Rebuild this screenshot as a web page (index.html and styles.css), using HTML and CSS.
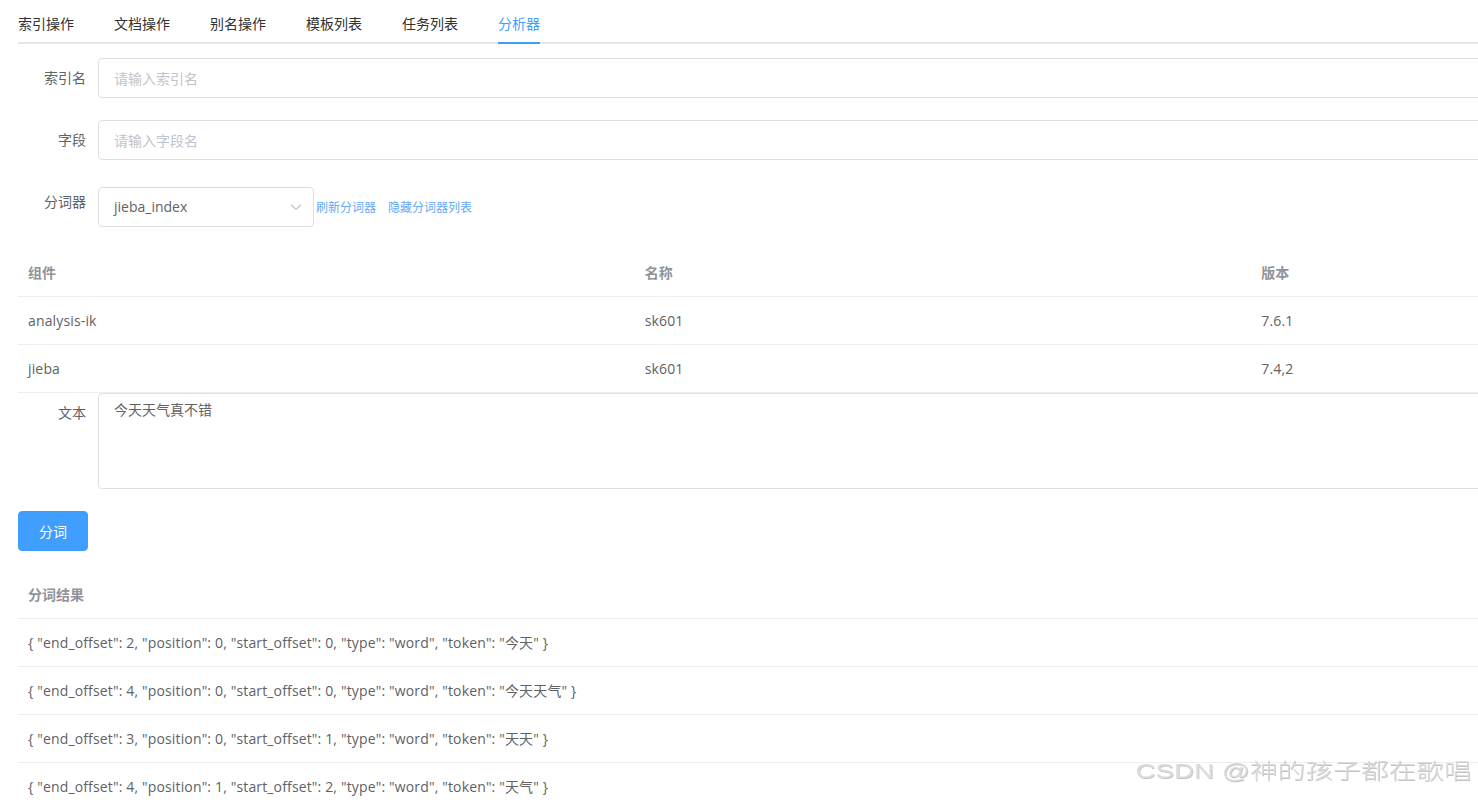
FILE: index.html
```html
<!DOCTYPE html>
<html lang="zh-CN">
<head>
<meta charset="utf-8">
<title>分析器</title>
<link rel="stylesheet" href="styles.css">
</head>
<body>
<div class="page">
  <div class="tabs">
    <div class="tab">索引操作</div>
    <div class="tab">文档操作</div>
    <div class="tab">别名操作</div>
    <div class="tab">模板列表</div>
    <div class="tab">任务列表</div>
    <div class="tab active">分析器</div>
  </div>

  <div class="form">
    <div class="form-item">
      <label class="label">索引名</label>
      <div class="content"><input class="input" placeholder="请输入索引名"></div>
    </div>
    <div class="form-item">
      <label class="label">字段</label>
      <div class="content"><input class="input" placeholder="请输入字段名"></div>
    </div>
    <div class="form-item">
      <label class="label">分词器</label>
      <div class="content content-select">
        <div class="select">
          <span class="select-value">jieba_index</span>
          <svg class="chevron" width="12" height="8" viewBox="0 0 12 8"><polyline points="1,1.5 6,6.5 11,1.5" fill="none" stroke="#c0c4cc" stroke-width="1.2"/></svg>
        </div>
        <span class="link link-first">刷新分词器</span>
        <span class="link">隐藏分词器列表</span>
      </div>
    </div>
  </div>

  <table class="table">
    <thead>
      <tr><th>组件</th><th>名称</th><th>版本</th></tr>
    </thead>
    <tbody>
      <tr><td>analysis-ik</td><td>sk601</td><td>7.6.1</td></tr>
      <tr><td>jieba</td><td>sk601</td><td>7.4,2</td></tr>
    </tbody>
  </table>

  <div class="form">
    <div class="form-item">
      <label class="label">文本</label>
      <div class="content"><textarea class="textarea" rows="4">今天天气真不错</textarea></div>
    </div>
  </div>

  <button class="btn">分词</button>

  <table class="table results">
    <thead>
      <tr><th>分词结果</th></tr>
    </thead>
    <tbody>
      <tr><td>{ "end_offset": 2, "position": 0, "start_offset": 0, "type": "word", "token": "今天" }</td></tr>
      <tr><td>{ "end_offset": 4, "position": 0, "start_offset": 0, "type": "word", "token": "今天天气" }</td></tr>
      <tr><td>{ "end_offset": 3, "position": 0, "start_offset": 1, "type": "word", "token": "天天" }</td></tr>
      <tr><td>{ "end_offset": 4, "position": 1, "start_offset": 2, "type": "word", "token": "天气" }</td></tr>
    </tbody>
  </table>
</div>
<div class="watermark">CSDN @神的孩子都在歌唱</div>
</body>
</html>
```
FILE: styles.css
```css
html, body {
  margin: 0;
  padding: 0;
  background: #fff;
  overflow: hidden;
}
body {
  font-family: "Open Sans", "Noto Sans CJK SC", sans-serif;
  font-size: 14px;
  color: #606266;
}
.page {
  width: 1850px;
  padding: 4px 0 0 18px;
}
.tabs {
  display: flex;
  height: 40px;
  box-shadow: inset 0 -2px 0 #e4e7ed;
  margin-bottom: 14px;
}
.tab {
  height: 40px;
  line-height: 40px;
  padding: 0 20px;
  color: #303133;
  font-size: 14px;
}
.tab:first-child { padding-left: 0; }
.tab:last-child { padding-right: 0; }
.tab.active {
  color: #409eff;
  background-image: linear-gradient(#409eff, #409eff);
  background-size: 100% 2px;
  background-position: left bottom;
  background-repeat: no-repeat;
  background-origin: content-box;
  background-clip: content-box;
}
.form-item {
  display: flex;
  align-items: flex-start;
  margin-bottom: 22px;
}
.label {
  width: 80px;
  flex: none;
  box-sizing: border-box;
  padding-right: 12px;
  text-align: right;
  line-height: 40px;
  color: #606266;
}
.content {
  flex: 1;
  display: flex;
}
.content-select {
  padding-top: 5px;
  align-items: center;
}
.input {
  flex: 1;
  height: 40px;
  box-sizing: border-box;
  border: 1px solid #dcdfe6;
  border-radius: 4px;
  padding: 0 15px;
  font: inherit;
  color: #606266;
  outline: none;
}
.input::placeholder { color: #c0c4cc; }
.select {
  width: 216px;
  height: 40px;
  box-sizing: border-box;
  border: 1px solid #dcdfe6;
  border-radius: 4px;
  padding: 0 11px 0 15px;
  display: flex;
  align-items: center;
  justify-content: space-between;
  color: #606266;
}
.select-value { line-height: 20px; margin-top: -1px; }
.chevron { display: block; }
.link {
  font-size: 12px;
  color: #62a9fb;
  margin-left: 12px;
  line-height: 16px;
  margin-top: 2px;
}
.link-first { margin-left: 2px; }
.table {
  width: 1850px;
  border-collapse: collapse;
  table-layout: fixed;
  margin-bottom: 0;
}
.table th, .table td {
  text-align: left;
  padding: 12px 10px;
  line-height: 23px;
  border-bottom: 1px solid #ebeef5;
  font-size: 14px;
  white-space: nowrap;
}
.table th {
  color: #909399;
  font-weight: bold;
}
.table td {
  color: #606266;
  letter-spacing: 0.15px;
}
.textarea {
  flex: 1;
  box-sizing: border-box;
  height: 96px;
  border: 1px solid #dcdfe6;
  border-radius: 4px;
  padding: 5px 15px;
  font: inherit;
  line-height: 1.5;
  color: #606266;
  resize: none;
  outline: none;
  display: block;
}
.btn {
  display: block;
  width: 70px;
  height: 40px;
  border: 1px solid #409eff;
  border-radius: 4px;
  background: #409eff;
  color: #fff;
  font: inherit;
  font-size: 14px;
  padding: 0;
  margin-bottom: 20px;
}
.watermark {
  position: fixed;
  right: 6px;
  bottom: 18px;
  font-family: "Liberation Sans", "Noto Sans CJK SC", sans-serif;
  font-size: 21px;
  font-weight: 300;
  color: #dcdcdc;
  text-shadow: 0.5px 0.5px 0 #c4c4c4;
  transform: scaleX(1.32);
  transform-origin: right bottom;
  white-space: nowrap;
}
```
